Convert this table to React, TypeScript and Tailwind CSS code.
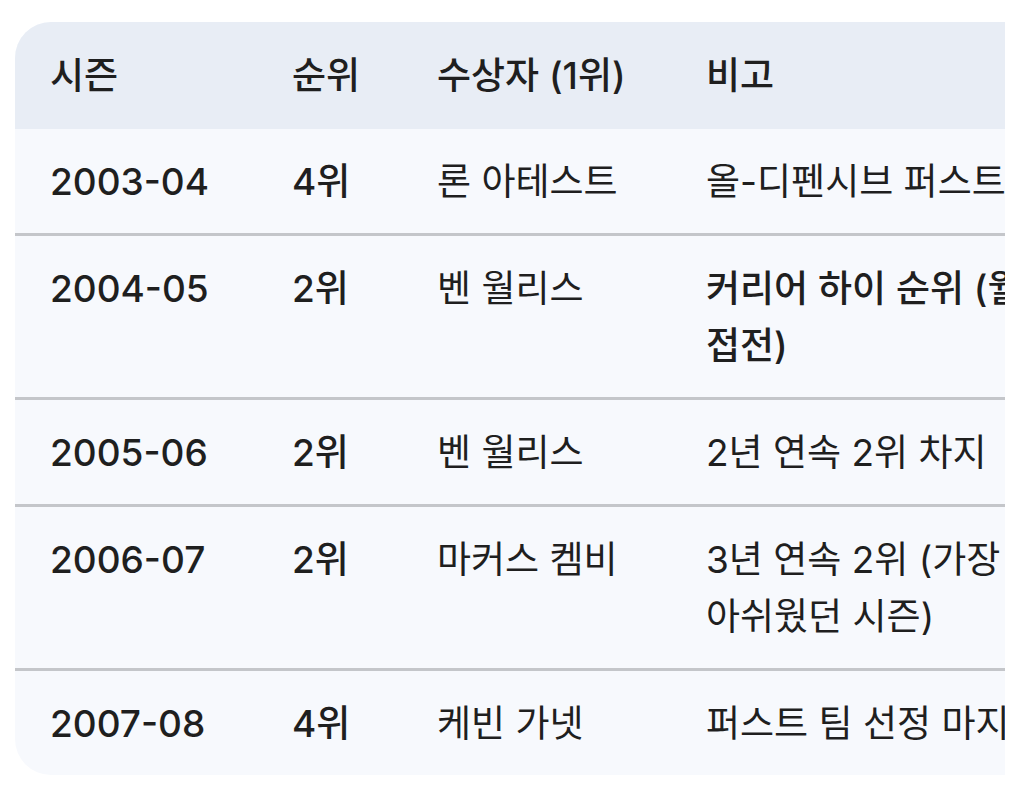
import React from "react";

const rows: { season: string; rank: string; winner: string; note: React.ReactNode; bold?: boolean }[] = [
  { season: "2003-04", rank: "4위", winner: "론 아테스트", note: <>올-디펜시브 퍼스트 팀</> },
  {
    season: "2004-05",
    rank: "2위",
    winner: "벤 월리스",
    note: (
      <>
        커리어 하이 순위 (월리스와 치열한
        <br />
        접전)
      </>
    ),
    bold: true,
  },
  { season: "2005-06", rank: "2위", winner: "벤 월리스", note: <>2년 연속 2위 차지</> },
  {
    season: "2006-07",
    rank: "2위",
    winner: "마커스 켐비",
    note: (
      <>
        3년 연속 2위 (가장
        <br />
        아쉬웠던 시즌)
      </>
    ),
  },
  { season: "2007-08", rank: "4위", winner: "케빈 가넷", note: <>퍼스트 팀 선정 마지막 시즌</> },
];

export default function App() {
  return (
    <div
      className="w-[1028px] h-[807px] bg-white pt-[22px] pl-[15px]"
      style={{ fontFamily: "Inter, 'Noto Sans CJK KR', sans-serif" }}
    >
      <div className="w-[990px] overflow-hidden rounded-l-[36px] bg-[#f7f9fd] text-[#1f1f1f]">
        <table className="w-[1140px] border-collapse text-left text-[37px] leading-[57px] table-fixed">
          <colgroup>
            <col className="w-[242px]" />
            <col className="w-[145px]" />
            <col className="w-[269px]" />
            <col className="w-[484px]" />
          </colgroup>
          <thead>
            <tr className="bg-[#e8edf5]">
              <th className="pl-[35px] py-[25px] font-medium align-top">시즌</th>
              <th className="pl-[35px] py-[25px] font-medium align-top">순위</th>
              <th className="pl-[35px] py-[25px] font-medium align-top">수상자 (1위)</th>
              <th className="pl-[35px] py-[25px] font-medium align-top">비고</th>
            </tr>
          </thead>
          <tbody>
            {rows.map((r, i) => (
              <tr key={r.season} className={i > 0 ? "border-t-[3px] border-[#c4c6ca]" : ""}>
                <td className="pl-[35px] pt-6 pb-[23px] align-top font-medium">{r.season}</td>
                <td className="pl-[35px] pt-6 pb-[23px] align-top font-medium">{r.rank}</td>
                <td className="pl-[35px] pt-6 pb-[23px] align-top">{r.winner}</td>
                <td
                  className={`pl-[35px] pt-6 pb-[23px] align-top whitespace-nowrap ${r.bold ? "font-medium" : ""}`}
                >
                  {r.note}
                </td>
              </tr>
            ))}
          </tbody>
        </table>
      </div>
    </div>
  );
}
